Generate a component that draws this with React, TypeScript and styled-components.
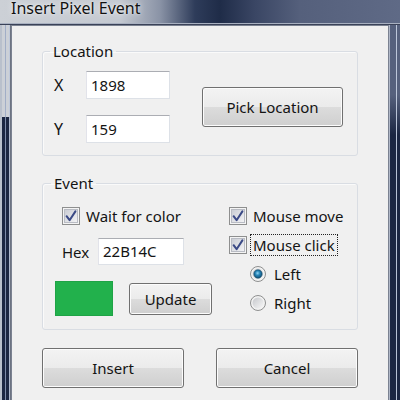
import React, { FC } from 'react';
import styled, { createGlobalStyle } from 'styled-components';

const GlobalStyle = createGlobalStyle`
  html, body {
    margin: 0;
    padding: 0;
    background: #1e2a44;
    overflow: hidden;
  }
`;

const CheckMark: FC<{ checked?: boolean }> = ({ checked }) => (
  <svg width="18" height="18" viewBox="0 0 18 18">
    <defs>
      <linearGradient id="cbFill" x1="0" y1="0" x2="1" y2="1">
        <stop offset="0" stopColor="#c9ccd3" />
        <stop offset="1" stopColor="#f4f4f6" />
      </linearGradient>
    </defs>
    <rect x="0.5" y="0.5" width="17" height="17" fill="#f4f4f4" stroke="#8e8f8f" />
    <rect x="2.5" y="2.5" width="13" height="13" fill="url(#cbFill)" stroke="#b9bcc4" />
    {checked && (
      <path
        d="M4.6 9.2 L7.6 13.2 L13.4 4.4"
        fill="none"
        stroke="#3b4a86"
        strokeWidth="2"
        strokeLinecap="round"
        strokeLinejoin="round"
      />
    )}
  </svg>
);

const RadioDot: FC<{ checked?: boolean }> = ({ checked }) => (
  <svg width="16" height="16" viewBox="0 0 16 16">
    <defs>
      <linearGradient id="rdFill" x1="0" y1="0" x2="1" y2="1">
        <stop offset="0" stopColor="#c6c8cc" />
        <stop offset="1" stopColor="#f7f7f7" />
      </linearGradient>
      <radialGradient id="rdDot" cx="0.45" cy="0.4" r="0.6">
        <stop offset="0" stopColor="#8fd3f2" />
        <stop offset="0.45" stopColor="#2784b6" />
        <stop offset="1" stopColor="#104f75" />
      </radialGradient>
    </defs>
    <circle cx="8" cy="8" r="7.5" fill="#f2f2f2" stroke="#8e8f8f" />
    <circle cx="8" cy="8" r="5.5" fill="url(#rdFill)" />
    {checked && <circle cx="8" cy="8" r="4.2" fill="url(#rdDot)" stroke="#0f4463" strokeWidth="0.6" />}
  </svg>
);

const App: FC = () => {
  return (
    <Screen>
      <GlobalStyle />
      <TitleBar>
        <Title>Insert Pixel Event</Title>
      </TitleBar>
      <Frame>
        <SideFrame $side="left" />
        <Client>
          <GroupBox>
            <Legend>Location</Legend>
            <LocationGrid>
              <FieldLabel>X</FieldLabel>
              <TextBox>1898</TextBox>
              <PickButton>Pick Location</PickButton>
              <FieldLabel>Y</FieldLabel>
              <TextBox>159</TextBox>
            </LocationGrid>
          </GroupBox>

          <EventBox>
            <Legend>Event</Legend>
            <EventColumns>
              <LeftColumn>
                <CheckRow $indent={7}>
                  <CheckMark checked />
                  <OptionText>Wait for color</OptionText>
                </CheckRow>
                <HexRow>
                  <HexLabel>Hex</HexLabel>
                  <HexBox>22B14C</HexBox>
                </HexRow>
                <SwatchRow>
                  <Swatch $color="#22b14c" />
                  <UpdateButton>Update</UpdateButton>
                </SwatchRow>
              </LeftColumn>
              <RightColumn>
                <CheckRow>
                  <CheckMark checked />
                  <OptionText>Mouse move</OptionText>
                </CheckRow>
                <CheckRow>
                  <CheckMark checked />
                  <OptionText $focused>Mouse click</OptionText>
                </CheckRow>
                <CheckRow $indent={21}>
                  <RadioDot checked />
                  <OptionText $gap={5}>Left</OptionText>
                </CheckRow>
                <CheckRow $indent={21}>
                  <RadioDot />
                  <OptionText $gap={5}>Right</OptionText>
                </CheckRow>
              </RightColumn>
            </EventColumns>
          </EventBox>

          <ButtonRow>
            <DialogButton>Insert</DialogButton>
            <DialogButton>Cancel</DialogButton>
          </ButtonRow>
        </Client>
        <SideFrame $side="right" />
      </Frame>
    </Screen>
  );
};

const Screen = styled.div`
  width: 400px;
  height: 400px;
  overflow: hidden;
  display: flex;
  flex-direction: column;
  font-family: 'Noto Sans', 'DejaVu Sans', sans-serif;
  color: #141414;
`;

const TitleBar = styled.div`
  height: 25px;
  flex-shrink: 0;
  overflow: hidden;
  padding-left: 11px;
  background: linear-gradient(
    to right,
    #ccd0d6 0px,
    #c4c9d1 120px,
    #8a93a6 160px,
    #2e3c5a 195px,
    #1f2c48 220px,
    #3a4664 255px,
    #55607c 300px,
    #5f6a86 400px
  );
  box-shadow: inset 0 -1px 0 #3a4258, inset 0 -2px 0 #a8b0c0;
`;

const Title = styled.div`
  font-size: 16px;
  line-height: 16px;
  color: #111;
  white-space: nowrap;
  text-shadow: 0 0 6px rgba(255, 255, 255, 0.85), 0 0 2px rgba(255, 255, 255, 0.7);
`;

const Frame = styled.div`
  flex: 1;
  display: flex;
`;

const SideFrame = styled.div<{ $side: 'left' | 'right' }>`
  width: 11px;
  flex-shrink: 0;
  ${({ $side }) =>
    $side === 'left'
      ? `background:
          linear-gradient(to right, #b9c0cc 0 2px, transparent 2px 5px, rgba(150,165,195,0.8) 5px 6px, transparent 6px 9px, rgba(190,200,220,0.9) 9px 10px, #6c7382 10px),
          linear-gradient(to bottom, #ccd0d7 0 92px, #1b2642 92px);`
      : `background:
          linear-gradient(to right, #b0b8c8 0 1px, transparent 1px 7px, rgba(200,210,228,0.9) 7px 8px, transparent 8px),
          linear-gradient(to bottom, #56617d 0 70px, #1b2642 110px);`}
`;

const Client = styled.div`
  flex: 1;
  background: #f0f0f0;
  border: 1px solid #7b8291;
  border-bottom: none;
  padding: 16px 30px 0;
  display: flex;
  flex-direction: column;
`;

const GroupBox = styled.fieldset`
  margin: 0;
  padding: 11px 14px 12px 11px;
  border: 1px solid #d9dde3;
  border-radius: 3px;
  box-shadow: inset 1px 1px 0 #fafafa;
`;

const EventBox = styled(GroupBox)`
  margin-top: 18px;
  padding: 13px 10px 13px 12px;
`;

const Legend = styled.legend`
  margin-left: -4px;
  padding: 0 3px;
  font-size: 15px;
  line-height: 18px;
`;

const LocationGrid = styled.div`
  display: grid;
  grid-template-columns: 32px 84px 1fr;
  grid-template-rows: 28px 28px;
  row-gap: 16px;
  align-items: center;
`;

const FieldLabel = styled.span`
  font-size: 16px;
  line-height: 20px;
`;

const TextBox = styled.div`
  box-sizing: border-box;
  height: 28px;
  background: #fff;
  border: 1px solid #dde1e7;
  border-top-color: #abadb3;
  border-left-color: #e2e3ea;
  padding: 2px 4px 0;
  font-size: 15px;
  line-height: 22px;
`;

const HexBox = styled(TextBox)`
  width: 86px;
  height: 27px;
  line-height: 21px;
`;

const WinButton = styled.button`
  box-sizing: border-box;
  font-family: inherit;
  font-size: 15px;
  color: #141414;
  border: 1px solid #707070;
  border-radius: 3px;
  box-shadow: inset 0 0 0 1px #fcfcfc;
  background: linear-gradient(to bottom, #f3f3f3 0%, #ebebeb 50%, #dcdcdc 51%, #cfcfcf 100%);
  padding: 0;
  cursor: default;
`;

const PickButton = styled(WinButton)`
  grid-column: 3;
  grid-row: 1 / span 2;
  margin-left: 32px;
  width: 141px;
  height: 40px;
`;

const EventColumns = styled.div`
  display: grid;
  grid-template-columns: 174px 1fr;
`;

const LeftColumn = styled.div`
  display: flex;
  flex-direction: column;
`;

const RightColumn = styled.div`
  display: flex;
  flex-direction: column;
  gap: 7px;
`;

const CheckRow = styled.div<{ $indent?: number }>`
  display: flex;
  align-items: center;
  height: 22px;
  white-space: nowrap;
  margin-left: ${({ $indent }) => $indent || 0}px;
  svg {
    flex-shrink: 0;
  }
`;

const OptionText = styled.span<{ $focused?: boolean; $gap?: number }>`
  margin-left: ${({ $gap }) => $gap ?? 3}px;
  padding: 0 2px;
  font-size: 15px;
  line-height: 20px;
  border: 1px ${({ $focused }) => ($focused ? 'dotted #222' : 'solid transparent')};
`;

const HexRow = styled.div`
  display: flex;
  align-items: center;
  margin: 11px 0 0 7px;
`;

const HexLabel = styled.span`
  width: 36px;
  font-size: 15px;
`;

const SwatchRow = styled.div`
  display: flex;
  align-items: center;
  gap: 16px;
  margin-top: 16px;
`;

const Swatch = styled.div<{ $color: string }>`
  width: 58px;
  height: 35px;
  background: ${({ $color }) => $color};
  box-shadow: inset 0 0 0 1px rgba(0, 0, 0, 0.08);
`;

const UpdateButton = styled(WinButton)`
  width: 83px;
  height: 32px;
`;

const ButtonRow = styled.div`
  display: flex;
  justify-content: space-between;
  margin-top: 18px;
`;

const DialogButton = styled(WinButton)`
  width: 142px;
  height: 40px;
`;

export default App;
